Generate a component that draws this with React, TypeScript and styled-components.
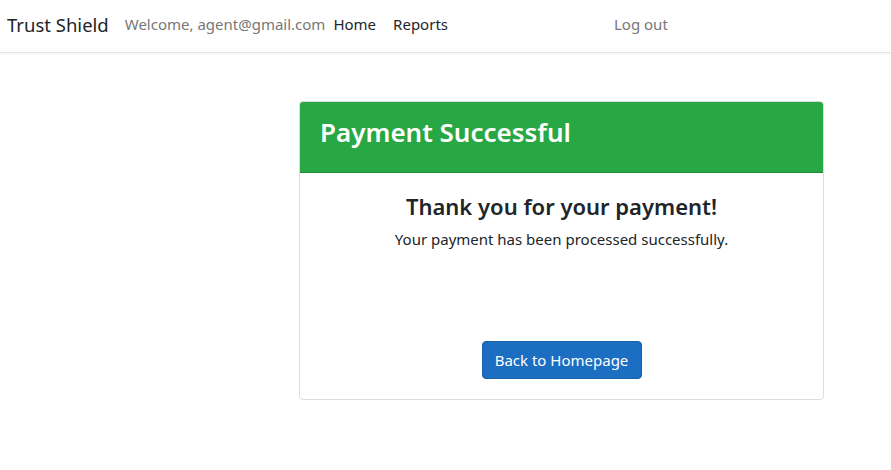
import React from "react";
import styled, { createGlobalStyle } from "styled-components";

const Global = createGlobalStyle`
  html, body { margin: 0; padding: 0; background: #fff; }
  body { font-family: "Noto Sans", "Open Sans", sans-serif; color: #212529; }
  * { box-sizing: border-box; }
`;

const Navbar = styled.nav`
  height: 53px;
  display: flex;
  align-items: center;
  padding: 0 7px 4px;
  border-bottom: 1px solid #e5e5e5;
  box-shadow: 0 1px 2px rgba(0,0,0,0.05);
`;

const Brand = styled.a`
  font-size: 18.5px;
  color: #212529;
  margin-right: 16px;
  text-decoration: none;
`;

const NavText = styled.span<{ $muted?: boolean }>`
  font-size: 15px;
  color: ${(p) => (p.$muted ? "#777" : "#212529")};
`;

const NavLinks = styled.div`
  display: flex;
  gap: 17px;
  margin-left: 8px;
`;

const LogOut = styled.a`
  font-size: 15px;
  color: #777;
  margin-left: 166px;
`;

const Main = styled.main`
  padding: 48px 0 0 299px;
`;

const Card = styled.div`
  width: 525px;
  border: 1px solid #dcdcdc;
  border-radius: 4px;
  overflow: hidden;
`;

const CardHeader = styled.div`
  background: #28a745;
  height: 71px;
  display: flex;
  align-items: center;
  padding: 0 20px 10px;
  border-bottom: 1px solid #1f8a38;
`;

const Title = styled.h2`
  margin: 0;
  color: #fff;
  font-size: 26px;
  font-weight: 600;
`;

const CardBody = styled.div`
  height: 226px;
  display: flex;
  flex-direction: column;
  align-items: center;
  padding: 18px 16px 20px;
`;

const Thanks = styled.h3`
  margin: 0;
  font-size: 22px;
  font-weight: 600;
`;

const Message = styled.p`
  margin: 8px 0 0;
  font-size: 15px;
`;

const Button = styled.button`
  margin-top: auto;
  width: 160px;
  height: 38px;
  background: #1b6ec2;
  border: 1px solid #1861ac;
  border-radius: 4px;
  color: #fff;
  font-family: inherit;
  font-size: 15px;
`;

export default function App() {
  return (
    <>
      <Global />
      <Navbar>
        <Brand>Trust Shield</Brand>
        <NavText $muted>Welcome, agent@gmail.com</NavText>
        <NavLinks>
          <NavText>Home</NavText>
          <NavText>Reports</NavText>
        </NavLinks>
        <LogOut>Log out</LogOut>
      </Navbar>
      <Main>
        <Card>
          <CardHeader>
            <Title>Payment Successful</Title>
          </CardHeader>
          <CardBody>
            <Thanks>Thank you for your payment!</Thanks>
            <Message>Your payment has been processed successfully.</Message>
            <Button>Back to Homepage</Button>
          </CardBody>
        </Card>
      </Main>
    </>
  );
}
